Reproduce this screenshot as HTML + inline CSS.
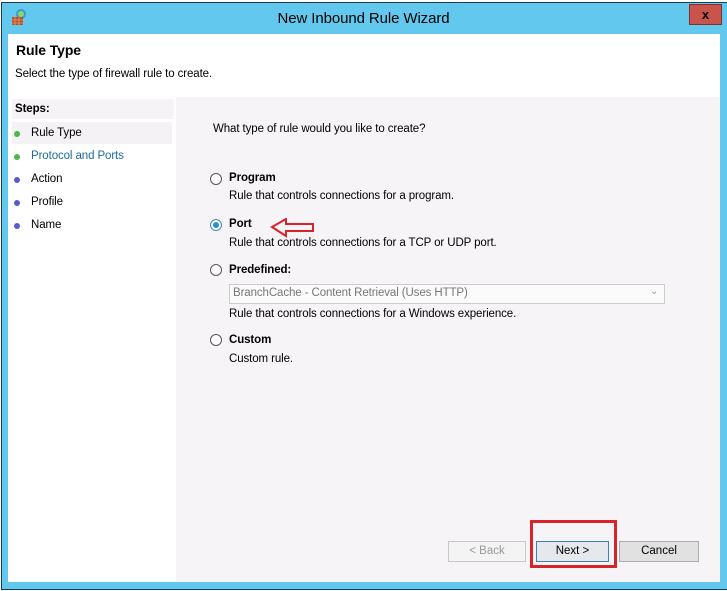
<!DOCTYPE html>
<html><head><style>
*{margin:0;padding:0;box-sizing:border-box}
body{width:727px;height:591px;background:#fff;font-family:"Liberation Sans",sans-serif;font-size:11.5px;color:#000;position:relative;overflow:hidden}
.abs{position:absolute}
.frame{left:1px;top:2px;width:726px;height:588px;background:#62c8ee;border:1px solid #1e3a4f;border-right:none}
.t{white-space:nowrap;letter-spacing:-0.1px}
.radio{width:12px;height:12px;border-radius:50%;border:1px solid #555;background:#fff}
.btn{height:21px;border:1px solid #adadad;background:#e1e1e1;text-align:center;line-height:19px;font-size:11.5px}
</style></head><body>
<div class="abs frame"></div>
<svg class="abs" style="left:10px;top:8px" width="18" height="18" viewBox="0 0 18 18"><circle cx="11" cy="6" r="5" fill="#3a9cd0"/><circle cx="11" cy="6" r="3" fill="#8bd66e"/><rect x="2" y="9" width="11" height="8" fill="#b5502a"/><path d="M2 12h11M2 15h11M5 9v8M9 9v8" stroke="#e08a5a" stroke-width="1"/></svg>
<div class="abs t" style="left:0;width:727px;top:10px;text-align:center;font-size:15px;color:#000">New Inbound Rule Wizard</div>
<div class="abs" style="left:689px;top:4px;width:33px;height:21px;background:#c9544c;border:1px solid #7a3430;color:#000;font-weight:bold;text-align:center;line-height:19px;font-size:13px">x</div>
<div class="abs" style="left:8px;top:34px;width:712px;height:548px;background:#fff"></div>
<div class="abs" style="left:176px;top:97px;width:544px;height:485px;background:#f7f4f8"></div>
<div class="abs t" style="left:16px;top:42px;font-size:14px;font-weight:bold">Rule Type</div>
<div class="abs t" style="left:15px;top:68px">Select the type of firewall rule to create.</div>
<div class="abs" style="left:12px;top:99px;width:162px;height:20px;background:#f5f3f5"></div>
<div class="abs t" style="left:15px;top:103px;font-weight:bold">Steps:</div>
<div class="abs" style="left:12px;top:122px;width:160px;height:22px;background:#f4f2f4"></div>
<div class="abs" style="left:14px;top:131px;width:6px;height:6px;border-radius:50%;background:#4cb84a"></div>
<div class="abs t" style="left:31px;top:127px">Rule Type</div>
<div class="abs" style="left:14px;top:154px;width:6px;height:6px;border-radius:50%;background:#4cb84a"></div>
<div class="abs t" style="left:31px;top:150px;color:#1e6a9a">Protocol and Ports</div>
<div class="abs" style="left:14px;top:177px;width:6px;height:6px;border-radius:50%;background:#5a5ad0"></div>
<div class="abs t" style="left:31px;top:173px">Action</div>
<div class="abs" style="left:14px;top:200px;width:6px;height:6px;border-radius:50%;background:#5a5ad0"></div>
<div class="abs t" style="left:31px;top:196px">Profile</div>
<div class="abs" style="left:14px;top:223px;width:6px;height:6px;border-radius:50%;background:#5a5ad0"></div>
<div class="abs t" style="left:31px;top:219px">Name</div>
<div class="abs t" style="left:213px;top:123px">What type of rule would you like to create?</div>
<div class="abs radio" style="left:210px;top:173px"></div>
<div class="abs t" style="left:229px;top:172px;font-weight:bold">Program</div>
<div class="abs t" style="left:229px;top:190px">Rule that controls connections for a program.</div>
<div class="abs radio" style="left:210px;top:219px;border-color:#3a8cc0"><div style="margin:2px;width:6px;height:6px;border-radius:50%;background:#2a8ed0"></div></div>
<div class="abs t" style="left:229px;top:218px;font-weight:bold">Port</div>
<svg class="abs" style="left:270px;top:218px" width="46" height="20"><path d="M2 9L16 1V6H43V13H16V18Z" fill="none" stroke="#d8232a" stroke-width="2"/></svg>
<div class="abs t" style="left:229px;top:237px">Rule that controls connections for a TCP or UDP port.</div>
<div class="abs radio" style="left:210px;top:264px"></div>
<div class="abs t" style="left:229px;top:264px;font-weight:bold">Predefined:</div>
<div class="abs" style="left:229px;top:284px;width:436px;height:20px;border:1px solid #ccc;background:#fbfbfb"></div>
<div class="abs t" style="left:233px;top:287px;color:#777">BranchCache - Content Retrieval (Uses HTTP)</div>
<div class="abs t" style="left:650px;top:286px;color:#999;font-size:10px">&#8964;</div>
<div class="abs t" style="left:229px;top:308px">Rule that controls connections for a Windows experience.</div>
<div class="abs radio" style="left:210px;top:334px"></div>
<div class="abs t" style="left:229px;top:334px;font-weight:bold">Custom</div>
<div class="abs t" style="left:229px;top:353px">Custom rule.</div>
<div class="abs btn" style="left:448px;top:541px;width:78px;background:#f4f4f4;border-color:#c8c8c8;color:#999">&lt; Back</div>
<div class="abs btn" style="left:536px;top:541px;width:73px;border-color:#3c7fb1;background:#e5e8ec">Next &gt;</div>
<div class="abs btn" style="left:619px;top:541px;width:80px">Cancel</div>
<div class="abs" style="left:530px;top:520px;width:87px;height:48px;border:3px solid #d8232a"></div>
</body></html>
